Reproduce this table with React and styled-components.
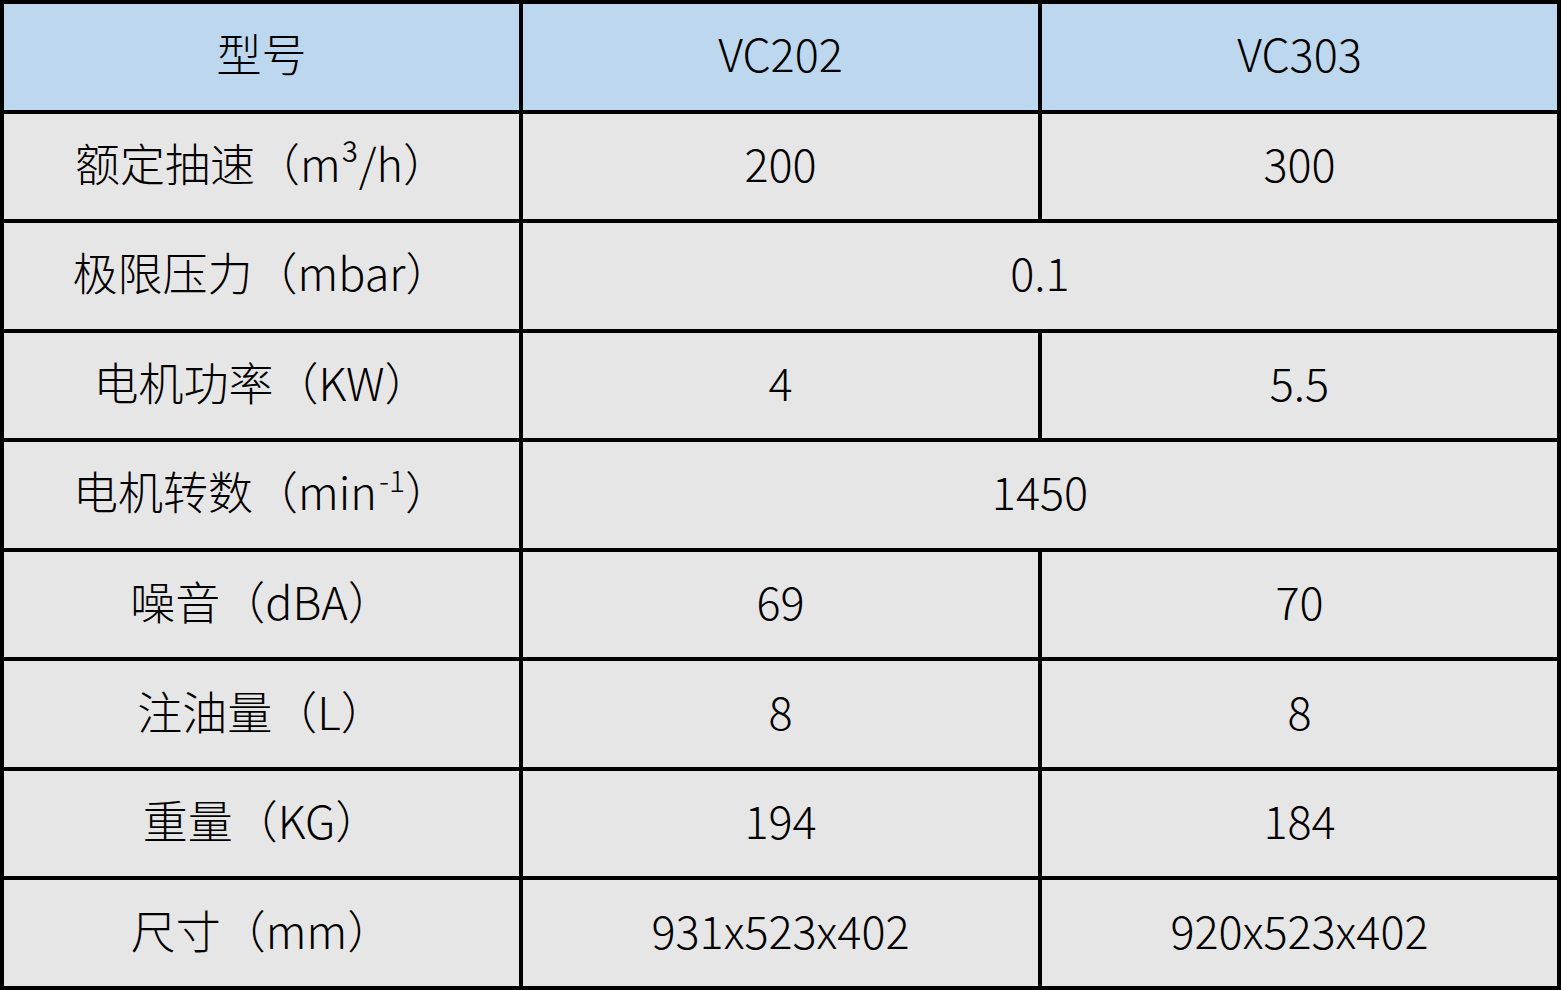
import React from "react";
import styled, { createGlobalStyle } from "styled-components";

const GlobalStyle = createGlobalStyle`
  html, body {
    margin: 0;
    padding: 0;
    background: #ffffff;
  }
`;

const Table = styled.div`
  display: grid;
  grid-template-columns: repeat(3, 515px);
  grid-template-rows: repeat(9, 1fr);
  gap: 4px;
  padding: 4px;
  width: 1561px;
  height: 990px;
  box-sizing: border-box;
  background: #000;
  font-family: "Noto Sans CJK SC", "Noto Sans", sans-serif;
  font-weight: 300;
  font-size: 45px;
  color: #000;
`;

const Cell = styled.div`
  display: flex;
  align-items: center;
  justify-content: center;
  padding-bottom: 8px;
  box-sizing: border-box;
  background: ${(p) => (p.$head ? "#bdd7ee" : "#e7e6e6")};
  grid-column: ${(p) => (p.$span ? `span ${p.$span}` : "auto")};
  white-space: nowrap;
`;

const Sup = styled.sup`
  font-size: 30px;
  line-height: 0;
  position: relative;
  top: -12px;
  margin-left: 2px;
`;

const rows = [
  { label: "额定抽速（m³/h）", values: ["200", "300"] },
  { label: "极限压力（mbar）", values: ["0.1"] },
  { label: "电机功率（KW）", values: ["4", "5.5"] },
  {
    label: (
      <>
        电机转数（min<Sup>-1</Sup>）
      </>
    ),
    values: ["1450"],
  },
  { label: "噪音（dBA）", values: ["69", "70"] },
  { label: "注油量（L）", values: ["8", "8"] },
  { label: "重量（KG）", values: ["194", "184"] },
  { label: "尺寸（mm）", values: ["931x523x402", "920x523x402"] },
];

export default function App() {
  return (
    <>
      <GlobalStyle />
      <Table>
        <Cell $head>型号</Cell>
        <Cell $head>VC202</Cell>
        <Cell $head>VC303</Cell>
        {rows.map((r, i) => (
          <React.Fragment key={i}>
            <Cell>{r.label}</Cell>
            {r.values.map((v, j) => (
              <Cell key={j} $span={r.values.length === 1 ? 2 : undefined}>
                {v}
              </Cell>
            ))}
          </React.Fragment>
        ))}
      </Table>
    </>
  );
}
